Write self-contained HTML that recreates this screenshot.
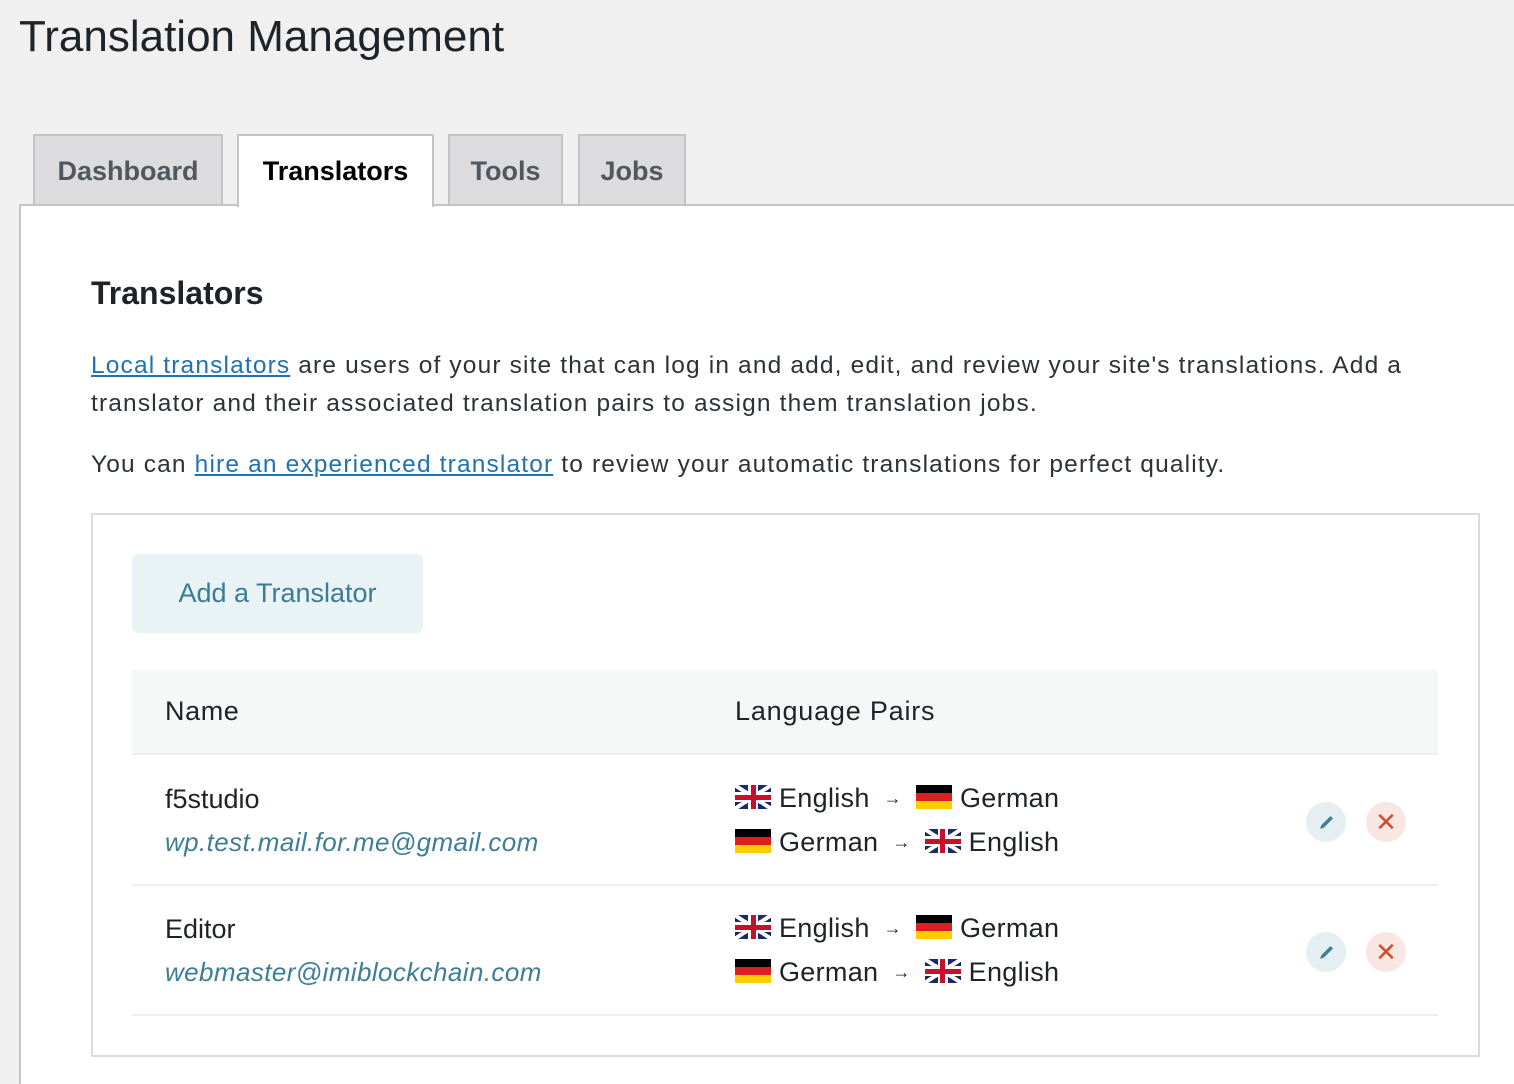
<!DOCTYPE html>
<html><head><style>
html,body{margin:0;width:1514px;height:1084px;overflow:hidden}
body{background:#f0f0f1;font-family:"Liberation Sans",sans-serif;color:#1d2327;position:relative}
.a{position:absolute;white-space:nowrap}
.tab{position:absolute;top:134px;height:70px;background:#dcdcde;border:2px solid #c3c4c7;border-bottom:none;box-sizing:border-box;font-size:27px;font-weight:bold;color:#50575e;text-align:center;line-height:70px}
.panel{position:absolute;left:19px;top:204px;width:1495px;height:880px;background:#fff;border:2px solid #c3c4c7;border-right:none;border-bottom:none;box-sizing:border-box}
a{color:#2271b1;text-decoration:underline}
.p{font-size:24.5px;color:#2c3338;letter-spacing:1.15px}
.flag{display:inline-block;width:36px;height:24px;vertical-align:-2px;margin-right:8px}
.de{background:linear-gradient(#000 0 33%,#dd1f1f 33% 66%,#ffcc00 66%)}
.uk{background:
linear-gradient(#c8102e,#c8102e) center/100% 5px no-repeat,
linear-gradient(#c8102e,#c8102e) center/5px 100% no-repeat,
linear-gradient(#fff,#fff) center/100% 10px no-repeat,
linear-gradient(#fff,#fff) center/10px 100% no-repeat,
linear-gradient(33deg,transparent 45%,#fff 45% 55%,transparent 55%),
linear-gradient(-33deg,transparent 45%,#fff 45% 55%,transparent 55%),#1b2a6b}
.lp{font-size:27px;color:#1d2327;line-height:44px;letter-spacing:0.3px}
.arr{font-size:18px;margin:0 14px;vertical-align:3px}
.circ{position:absolute;width:40px;height:40px;border-radius:50%;text-align:center;line-height:40px}
</style></head><body>
<div class="a" style="left:19px;top:12px;font-size:44px;color:#1d2327">Translation Management</div>
<div class="panel"></div>
<div class="tab" style="left:33px;width:190px">Dashboard</div>
<div class="tab" style="left:237px;width:197px;height:73px;background:#fff;color:#000">Translators</div>
<div class="tab" style="left:448px;width:115px">Tools</div>
<div class="tab" style="left:578px;width:108px">Jobs</div>
<div class="a" style="left:91px;top:275px;font-size:32px;font-weight:bold">Translators</div>
<div class="a p" style="left:91px;top:347px;line-height:38px;white-space:normal;width:1340px"><a>Local translators</a> are users of your site that can log in and add, edit, and review your site's translations. Add a translator and their associated translation pairs to assign them translation jobs.</div>
<div class="a p" style="left:91px;top:451px"><span>You can </span><a>hire an experienced translator</a> to review your automatic translations for perfect quality.</div>
<div class="a" style="left:91px;top:513px;width:1389px;height:544px;border:2px solid #dcdcde;box-sizing:border-box;background:#fff"></div>
<div class="a" style="left:132px;top:554px;width:291px;height:79px;background:#e9f2f4;border-radius:6px;color:#3a7c94;font-size:27px;text-align:center;line-height:79px">Add a Translator</div>
<div class="a" style="left:132px;top:670px;width:1306px;height:85px;background:#f6f7f7;border-bottom:2px solid #eee;box-sizing:border-box"></div>
<div class="a" style="left:165px;top:696px;font-size:27px;letter-spacing:0.6px">Name</div>
<div class="a" style="left:735px;top:696px;font-size:27px;letter-spacing:0.8px">Language Pairs</div>
<div class="a" style="left:132px;top:884px;width:1306px;border-top:2px solid #eee"></div>
<div class="a" style="left:132px;top:1014px;width:1306px;border-top:2px solid #eee"></div>

<div class="a" style="left:165px;top:784px;font-size:27px">f5studio</div>
<div class="a" style="left:165px;top:827px;font-size:26px;font-style:italic;color:#3d7e95;letter-spacing:0.4px">wp.test.mail.for.me@gmail.com</div>
<div class="a lp" style="left:735px;top:776px"><span class="flag uk"></span>English<span class="arr">→</span><span class="flag de"></span>German<br><span class="flag de"></span>German<span class="arr">→</span><span class="flag uk"></span>English</div>
<div class="circ" style="left:1306px;top:802px;background:#e5eff2"><svg width="40" height="40" viewBox="0 0 40 40"><path d="M14 27l1.5-4 9-9 2.5 2.5-9 9z" fill="#3d7e95"/></svg></div>
<div class="circ" style="left:1366px;top:802px;background:#f7e6e1;color:#c9512f;font-size:26px">✕</div>

<div class="a" style="left:165px;top:914px;font-size:27px">Editor</div>
<div class="a" style="left:165px;top:957px;font-size:26px;font-style:italic;color:#3d7e95;letter-spacing:0.4px">webmaster@imiblockchain.com</div>
<div class="a lp" style="left:735px;top:906px"><span class="flag uk"></span>English<span class="arr">→</span><span class="flag de"></span>German<br><span class="flag de"></span>German<span class="arr">→</span><span class="flag uk"></span>English</div>
<div class="circ" style="left:1306px;top:932px;background:#e5eff2"><svg width="40" height="40" viewBox="0 0 40 40"><path d="M14 27l1.5-4 9-9 2.5 2.5-9 9z" fill="#3d7e95"/></svg></div>
<div class="circ" style="left:1366px;top:932px;background:#f7e6e1;color:#c9512f;font-size:26px">✕</div>
</body></html>
